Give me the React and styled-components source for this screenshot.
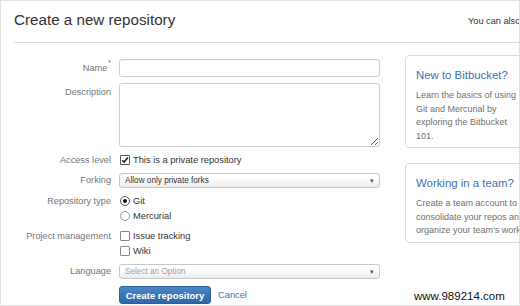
import styled, { createGlobalStyle } from "styled-components"

const Global = createGlobalStyle`
  html, body {
    margin: 0;
    padding: 0;
    background: #fff;
  }
  * {
    box-sizing: border-box;
  }
`

const Check = ({ checked }) => (
  <CheckBox $checked={checked}>
    {checked && (
      <svg width="8" height="8" viewBox="0 0 8 8">
        <path d="M1.2 4.2 L3.1 6.1 L6.9 1.6" fill="none" stroke="#222" strokeWidth="1.6" />
      </svg>
    )}
  </CheckBox>
)

const Select = ({ value, placeholder = false }) => (
  <SelectBox $placeholder={placeholder}>
    <span>{value}</span>
    <Caret>▾</Caret>
  </SelectBox>
)

export default () => (
  <Frame>
    <Global />
    <Header>
      <Title>Create a new repository</Title>
      <Hint>You can also import a repository</Hint>
    </Header>
    <Body>
      <Form>
        <Row>
          <Label $lh={18}>
            Name<Required>*</Required>
          </Label>
          <Input />
        </Row>
        <Row>
          <Label $lh={18}>Description</Label>
          <TextArea />
        </Row>
        <Row>
          <Label>Access level</Label>
          <Options>
            <Option>
              <Check checked />
              This is a private repository
            </Option>
          </Options>
        </Row>
        <Row>
          <Label $lh={15}>Forking</Label>
          <Select value="Allow only private forks" />
        </Row>
        <Row>
          <Label>Repository type</Label>
          <Options>
            <Option>
              <Radio $checked />
              Git
            </Option>
            <Option>
              <Radio />
              Mercurial
            </Option>
          </Options>
        </Row>
        <Row>
          <Label>Project management</Label>
          <Options>
            <Option>
              <Check />
              Issue tracking
            </Option>
            <Option>
              <Check />
              Wiki
            </Option>
          </Options>
        </Row>
        <Row>
          <Label $lh={15}>Language</Label>
          <Select value="Select an Option" placeholder />
        </Row>
        <Row $spaced>
          <span />
          <Actions>
            <Button>Create repository</Button>
            <CancelLink>Cancel</CancelLink>
          </Actions>
        </Row>
      </Form>
      <Sidebar>
        <Panel>
          <PanelTitle>New to Bitbucket?</PanelTitle>
          <PanelText>
            Learn the basics of using Git and Mercurial by exploring the Bitbucket 101.
          </PanelText>
        </Panel>
        <Panel>
          <PanelTitle>Working in a team?</PanelTitle>
          <PanelText>
            Create a team account to consolidate your repos and organize your team's work.
          </PanelText>
        </Panel>
      </Sidebar>
    </Body>
    <Watermark>www.989214.com</Watermark>
  </Frame>
)

const Frame = styled.div`
  position: relative;
  width: 520px;
  height: 306px;
  border: 1px solid #e3e3e3;
  overflow: hidden;
  background: #fff;
  font-family: "Liberation Sans", Arial, sans-serif;
  color: #333;
`

const Header = styled.div`
  display: flex;
  align-items: flex-start;
  height: 42px;
  margin-left: 13px;
  padding-top: 10px;
  border-bottom: 1px solid #dcdcdc;
`

const Title = styled.h1`
  flex: 0 0 454px;
  margin: 0;
  font-size: 15.2px;
  font-weight: normal;
  line-height: 18px;
  color: #333;
`

const Hint = styled.div`
  flex: 0 0 auto;
  margin-top: 3px;
  white-space: nowrap;
  font-size: 9.2px;
  line-height: 14px;
  color: #333;
`

const Body = styled.div`
  display: flex;
  align-items: flex-start;
`

const Form = styled.div`
  display: flex;
  flex-direction: column;
  gap: 6px;
  margin-left: 13px;
  padding-top: 16px;
`

const Row = styled.div`
  display: grid;
  grid-template-columns: 97px 261px;
  column-gap: 8px;
  align-items: start;
  margin-top: ${p => (p.$spaced ? 1 : 0)}px;
`

const Label = styled.div`
  text-align: right;
  font-size: 9.2px;
  line-height: ${p => p.$lh || 14}px;
  color: #757575;
  white-space: nowrap;
`

const Required = styled.sup`
  color: #d04437;
  font-size: 7px;
  vertical-align: top;
  line-height: 7px;
  margin-left: 1px;
`

const Input = styled.div`
  height: 18px;
  border: 1px solid #cfcfcf;
  border-radius: 3px;
  background: #fff;
  box-shadow: inset 0 1px 1px rgba(0, 0, 0, 0.04);
`

const TextArea = styled.textarea`
  display: block;
  width: 261px;
  height: 64px;
  margin: 0;
  border: 1px solid #cfcfcf;
  border-radius: 3px;
  background: #fff;
  resize: vertical;
  outline: none;
`

const Options = styled.div`
  display: flex;
  flex-direction: column;
  gap: 1px;
`

const Option = styled.label`
  display: flex;
  align-items: center;
  gap: 3px;
  height: 14px;
  font-size: 9.3px;
  color: #333;
  white-space: nowrap;
`

const CheckBox = styled.span`
  display: inline-flex;
  align-items: center;
  justify-content: center;
  width: 10px;
  height: 10px;
  margin-left: 1px;
  border: 1px solid ${p => (p.$checked ? "#555" : "#8a8a8a")};
  border-radius: 1px;
  background: #fff;
`

const Radio = styled.span`
  position: relative;
  display: inline-block;
  width: 10px;
  height: 10px;
  margin-left: 1px;
  border: 1px solid ${p => (p.$checked ? "#555" : "#9a9a9a")};
  border-radius: 50%;
  background: #fff;

  &::after {
    content: "";
    display: ${p => (p.$checked ? "block" : "none")};
    position: absolute;
    left: 2px;
    top: 2px;
    width: 4px;
    height: 4px;
    border-radius: 50%;
    background: #111;
  }
`

const SelectBox = styled.div`
  display: flex;
  align-items: center;
  justify-content: space-between;
  height: 15px;
  padding: 0 5px 0 5px;
  border: 1px solid #c8c8c8;
  border-radius: 3px;
  background: linear-gradient(#ffffff 30%, #ececec);
  font-size: 8.2px;
  color: ${p => (p.$placeholder ? "#a0a0a0" : "#333")};
  white-space: nowrap;
`

const Caret = styled.span`
  font-size: 7px;
  color: #555;
`

const Actions = styled.div`
  display: flex;
  align-items: center;
  gap: 7px;
`

const Button = styled.button`
  height: 18px;
  width: 92px;
  padding: 0;
  border: 1px solid #2d5f97;
  border-radius: 3px;
  background: linear-gradient(#4a85c4, #2e67a8);
  color: #fff;
  font-family: "Liberation Sans", Arial, sans-serif;
  font-size: 9.5px;
  font-weight: bold;
`

const CancelLink = styled.a`
  font-size: 9.3px;
  color: #3b73af;
`

const Sidebar = styled.div`
  display: flex;
  flex-direction: column;
  gap: 15px;
  margin-left: 25px;
  padding-top: 12px;
`

const Panel = styled.div`
  width: 131px;
  padding: 11px 10px 4px;
  border: 1px solid #dcdcdc;
  border-radius: 4px;
  background: #fff;
`

const PanelTitle = styled.div`
  font-size: 11.4px;
  line-height: 16px;
  color: #3b73af;
  white-space: nowrap;
`

const PanelText = styled.div`
  margin-top: 6px;
  font-size: 9px;
  line-height: 13.5px;
  color: #707070;
`

const Watermark = styled.div`
  position: absolute;
  left: 413px;
  top: 289px;
  font-family: Arial, "Liberation Sans", sans-serif;
  font-size: 11.5px;
  color: #111;
`
